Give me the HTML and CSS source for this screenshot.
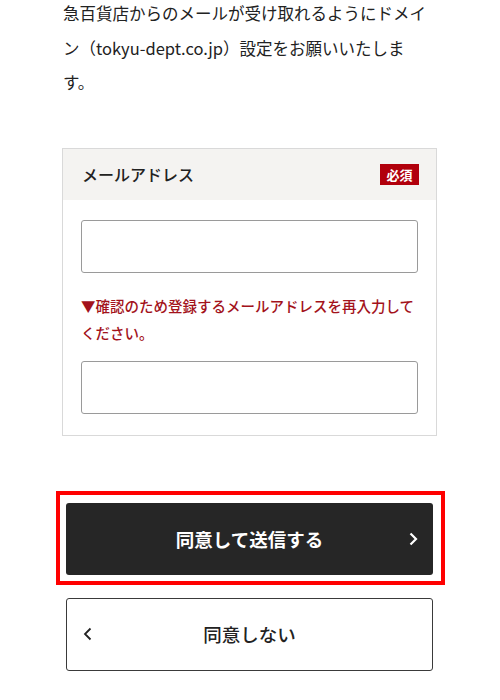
FILE: index.html
```html
<!DOCTYPE html>
<html lang="ja">
<head>
<meta charset="utf-8">
<link rel="stylesheet" href="styles.css">
</head>
<body>
<div class="page">
  <p class="intro">急百貨店からのメールが受け取れるようにドメイン（tokyu-dept.co.jp）設定をお願いいたしま<br>す。</p>

  <div class="field">
    <div class="field-head">
      <span class="field-label">メールアドレス</span>
      <span class="badge">必須</span>
    </div>
    <div class="field-body">
      <div class="input"></div>
      <p class="note">▼確認のため登録するメールアドレスを再入力してください。</p>
      <div class="input"></div>
    </div>
  </div>

  <div class="actions">
    <div class="highlight">
      <div class="btn btn-primary">
        <span class="btn-text">同意して送信する</span>
        <svg class="chev chev-right" width="9" height="14" viewBox="0 0 9 14"><path d="M1.5 1.5 L7 7 L1.5 12.5" fill="none" stroke="#fff" stroke-width="2.2"/></svg>
      </div>
    </div>
    <div class="btn btn-secondary">
      <svg class="chev chev-left" width="9" height="14" viewBox="0 0 9 14"><path d="M7.5 1.5 L2 7 L7.5 12.5" fill="none" stroke="#222" stroke-width="1.8"/></svg>
      <span class="btn-text">同意しない</span>
    </div>
  </div>
</div>
</body>
</html>
```

FILE: styles.css
```css
html, body {
  margin: 0;
  padding: 0;
  background: #fff;
}
body {
  font-family: "Noto Sans CJK JP", "Noto Sans", sans-serif;
  color: #222;
}
.page {
  width: 375px;
  margin: -4px 0 0 62px;
}
.intro {
  margin: 0;
  padding-left: 1px;
  font-size: 16.5px;
  line-height: 34.5px;
  color: #222;
}
.field {
  margin-top: 48px;
  border: 1px solid #d9d9d9;
}
.field-head {
  display: flex;
  align-items: center;
  justify-content: space-between;
  height: 51px;
  padding: 0 17px 0 19px;
  background: #f4f3f1;
}
.field-label {
  font-size: 16px;
  font-weight: 500;
  color: #222;
}
.badge {
  display: flex;
  align-items: center;
  justify-content: center;
  width: 39px;
  height: 21px;
  background: #b1000c;
  color: #fff;
  font-size: 13px;
  font-weight: 700;
}
.field-body {
  padding: 20px 18px 21px 18px;
}
.input {
  height: 51px;
  border: 1px solid #9a9a9a;
  border-radius: 3px;
  background: #fff;
}
.note {
  margin: 19px 0 15px;
  font-size: 14.5px;
  line-height: 27px;
  color: #a3121b;
  font-weight: 500;
}
.actions {
  margin: 67px 4px 0 4px;
  display: flex;
  flex-direction: column;
  gap: 23px;
}
.highlight {
  position: relative;
}
.highlight::after {
  content: "";
  position: absolute;
  left: -10px;
  right: -12px;
  top: -12px;
  bottom: -10px;
  border: 4px solid #f00;
  pointer-events: none;
}
.btn {
  position: relative;
  display: flex;
  align-items: center;
  justify-content: center;
  height: 72px;
  border-radius: 3px;
  box-sizing: border-box;
}
.btn-primary {
  background: #262626;
  color: #fff;
}
.btn-primary .btn-text {
  font-size: 18.5px;
  font-weight: 700;
}
.btn-secondary {
  height: 73px;
  background: #fff;
  border: 1.5px solid #3a3a3a;
  color: #222;
}
.btn-secondary .btn-text {
  font-size: 18.5px;
  font-weight: 500;
}
.chev {
  position: absolute;
  top: 50%;
  margin-top: -7px;
}
.chev-right {
  right: 15px;
}
.chev-left {
  left: 16px;
}
```
